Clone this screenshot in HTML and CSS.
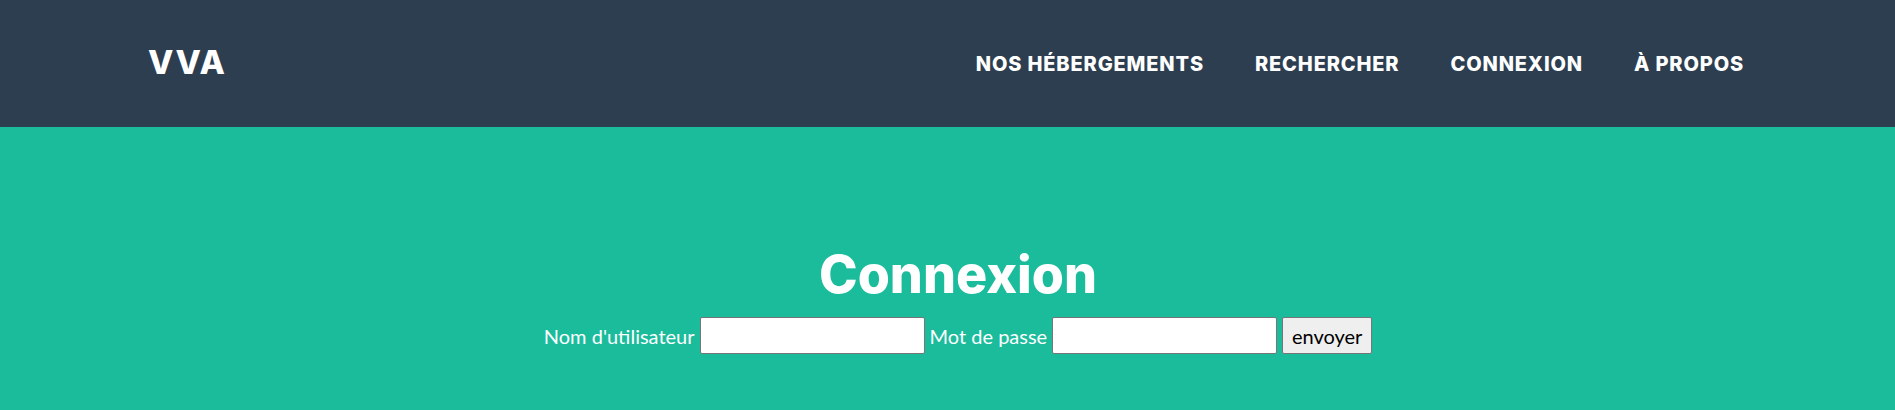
FILE: index.html
```html
<!DOCTYPE html>
<html lang="fr">
<head>
<meta charset="utf-8">
<title>Connexion - VVA</title>
<link rel="stylesheet" href="styles.css">
</head>
<body>
<header class="navbar">
  <a class="brand" href="#">VVA</a>
  <nav>
    <ul class="nav-list">
      <li><a class="nav-link" href="#">Nos hébergements</a></li>
      <li><a class="nav-link" href="#">Rechercher</a></li>
      <li><a class="nav-link" href="#">Connexion</a></li>
      <li><a class="nav-link" href="#">À propos</a></li>
    </ul>
  </nav>
</header>
<section class="masthead">
  <h1 class="title">Connexion</h1>
  <form class="login-form">
    <label class="label" for="user">Nom d'utilisateur</label>
    <input class="field" id="user" type="text">
    <label class="label" for="pass">Mot de passe</label>
    <input class="field" id="pass" type="password">
    <button class="submit" type="button">envoyer</button>
  </form>
</section>
</body>
</html>
```
FILE: styles.css
```css
html, body {
  margin: 0;
  padding: 0;
}
body {
  background: #1abc9c;
  font-family: Lato, "Liberation Sans", sans-serif;
}
.navbar {
  height: 127px;
  background: #2c3e50;
  display: flex;
  align-items: center;
  justify-content: space-between;
  padding: 0 151px 0 148px;
  box-sizing: border-box;
}
.brand {
  font-family: Inter, "Liberation Sans", sans-serif;
  font-weight: 800;
  font-size: 33px;
  letter-spacing: 1.5px;
  color: #fff;
  text-decoration: none;
  line-height: 1;
  margin-top: -3px;
}
.nav-list {
  list-style: none;
  margin: 0;
  padding: 0;
  display: flex;
  gap: 51px;
}
.nav-link {
  font-family: Inter, "Liberation Sans", sans-serif;
  font-weight: 800;
  font-size: 20px;
  letter-spacing: 0.85px;
  text-transform: uppercase;
  color: #fff;
  text-decoration: none;
  line-height: 1;
}
.masthead {
  height: 283px;
  box-sizing: border-box;
  padding: 117px 0 0 21px;
  display: flex;
  flex-direction: column;
  align-items: center;
}
.title {
  margin: 0 0 11px;
  font-family: Inter, "Liberation Sans", sans-serif;
  font-weight: 800;
  font-size: 52px;
  line-height: 1.2;
  color: #fff;
}
.login-form {
  display: flex;
  align-items: center;
  gap: 5px;
}
.label {
  font-size: 20px;
  color: #fff;
}
.field {
  width: 225px;
  height: 37px;
  box-sizing: border-box;
  margin: 0;
  border: 1px solid #767676;
  border-radius: 2px;
  background: #fff;
  font: 20px Lato, sans-serif;
}
.submit {
  width: 90px;
  height: 37px;
  box-sizing: border-box;
  margin: 0;
  padding: 0;
  border: 1px solid #767676;
  border-radius: 2px;
  background: #efefef;
  color: #000;
  font: 20px Lato, "Liberation Sans", sans-serif;
}
```
